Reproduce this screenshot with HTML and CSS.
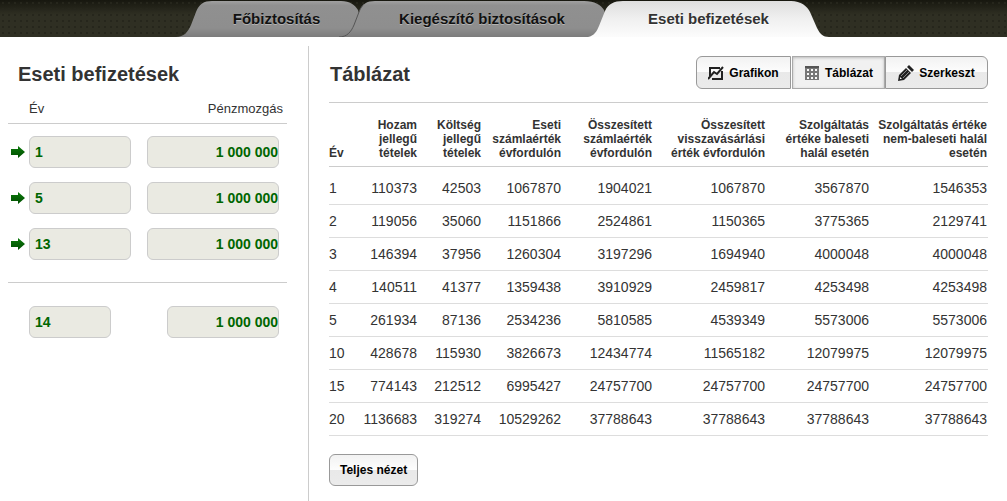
FILE: index.html
```html
<!DOCTYPE html>
<html lang="hu">
<head>
<meta charset="utf-8">
<title>Eseti befizetések</title>
<meta name="viewport" content="width=device-width, initial-scale=1">
<link rel="stylesheet" href="styles.css">
</head>
<body>
<svg class="defs" width="0" height="0" aria-hidden="true">
  <defs>
    <linearGradient id="tab-grey" x1="0" y1="0" x2="0" y2="1">
      <stop offset="0" stop-color="#a0a0a0"/><stop offset="0.12" stop-color="#909090"/><stop offset="0.75" stop-color="#8e8e8e"/><stop offset="1" stop-color="#7c7c7c"/>
    </linearGradient>
    <linearGradient id="tab-light" x1="0" y1="0" x2="0" y2="1">
      <stop offset="0" stop-color="#dedede"/><stop offset="0.5" stop-color="#f0f0f0"/><stop offset="1" stop-color="#fcfcfc"/>
    </linearGradient>
    <linearGradient id="arrow-green" x1="0" y1="0" x2="0" y2="1">
      <stop offset="0" stop-color="#0a7a0a"/><stop offset="1" stop-color="#004d00"/>
    </linearGradient>
  </defs>
  <symbol id="arrow" viewBox="0 0 14 12"><path d="M0 3H7V0L14 6L7 12V9H0Z" fill="url(#arrow-green)"/></symbol>
</svg>
<header class="topbar">
  <nav class="tabs">
    <a class="tab tab-main" href="#fo"><svg class="tab-shape" viewBox="0 0 189 36" preserveAspectRatio="none" aria-hidden="true"><path d="M0 36C8 36 12 31 15 24L20 11C23 3 28 0 36 0H165C174 0 179 4 182 9L189 36Z" fill="url(#tab-grey)"/></svg><span class="tab-text">Főbiztosítás</span></a>
    <a class="tab tab-extra" href="#kiegeszito"><svg class="tab-shape" viewBox="0 0 274 36" preserveAspectRatio="none" aria-hidden="true"><path d="M0 36C8 36 12 31 15 24L20 11C23 3 28 0 36 0H245C256 0 262 4 265 9L274 36Z" fill="url(#tab-grey)"/><path d="M0 36C8 36 12 31 15 24L20 11C21 8 23 5 25 3" fill="none" stroke="#555" stroke-width="1"/></svg><span class="tab-text">Kiegészítő biztosítások</span></a>
    <a class="tab tab-active" href="#eseti" aria-current="page"><svg class="tab-shape" viewBox="0 0 241 36" preserveAspectRatio="none" aria-hidden="true"><path d="M0 36C6 35 9 30 11 25L17 10C20 3 26 0 35 0H203C213 0 219 5 222 11L229 27C232 33 235 36 241 36Z" fill="url(#tab-light)"/></svg><span class="tab-text">Eseti befizetések</span></a>
  </nav>
</header>
<main class="content">
  <section class="payments">
    <h2 class="title">Eseti befizetések</h2>
    <div class="pay-head"><span>Év</span><span>Pénzmozgás</span></div>
    <div class="pay-rows">
      <div class="pay-row"><svg class="arrow" aria-hidden="true"><use href="#arrow"/></svg><input class="field year" aria-label="Év" value="1"><input class="field amount" aria-label="Pénzmozgás" value="1 000 000"></div>
      <div class="pay-row"><svg class="arrow" aria-hidden="true"><use href="#arrow"/></svg><input class="field year" aria-label="Év" value="5"><input class="field amount" aria-label="Pénzmozgás" value="1 000 000"></div>
      <div class="pay-row"><svg class="arrow" aria-hidden="true"><use href="#arrow"/></svg><input class="field year" aria-label="Év" value="13"><input class="field amount" aria-label="Pénzmozgás" value="1 000 000"></div>
    </div>
    <div class="pay-row pay-new"><input class="field year-new" aria-label="Új év" value="14"><input class="field amount-new" aria-label="Új pénzmozgás" value="1 000 000"></div>
  </section>
  <section class="results">
    <div class="results-head">
      <h2 class="title">Táblázat</h2>
      <div class="switch">
        <button class="btn first" type="button"><svg class="icon" viewBox="0 0 16 16" aria-hidden="true"><path d="M12 3H2V11M4 14H14V6" fill="none" stroke="#222" stroke-width="2"/><path d="M0 14L6 7L9 9L15 2" fill="none" stroke="#222" stroke-width="2"/></svg>Grafikon</button>
        <button class="btn pressed" type="button" aria-pressed="true"><svg class="icon" viewBox="0 0 16 16" aria-hidden="true"><path d="M1 1H15V15H1Z" fill="#777"/><path d="M1 1H15V3H1Z" fill="#555"/><path d="M3 4h2v2h-2zM7 4h2v2h-2zM11 4h2v2h-2zM3 8h2v2h-2zM7 8h2v2h-2zM11 8h2v2h-2zM3 12h2v2h-2zM7 12h2v2h-2zM11 12h2v2h-2z" fill="#f8f8f8"/></svg>Táblázat</button>
        <button class="btn last" type="button"><svg class="icon" viewBox="0 0 16 16" aria-hidden="true"><path d="M0 16L1 10L8 3L13 8L6 15Z" fill="#222"/><path d="M9 2L11 0L16 5L14 7Z" fill="#222"/><path d="M3 11L9 5M5 13L11 7" stroke="#888" stroke-width="1"/><path d="M2 12L4 14L2 14Z" fill="#f4f4f4"/></svg>Szerkeszt</button>
      </div>
    </div>
    <table class="grid">
      <colgroup><col class="c1"><col class="c2"><col class="c3"><col class="c4"><col class="c5"><col class="c6"><col class="c7"><col class="c8"></colgroup>
      <thead><tr><th>Év</th><th>Hozam<br>jellegű<br>tételek</th><th>Költség<br>jellegű<br>tételek</th><th>Eseti<br>számlaérték<br>évfordulón</th><th>Összesített<br>számlaérték<br>évfordulón</th><th>Összesített<br>visszavásárlási<br>érték évfordulón</th><th>Szolgáltatás<br>értéke baleseti<br>halál esetén</th><th>Szolgáltatás értéke<br>nem-baleseti halál<br>esetén</th></tr></thead>
      <tbody>
        <tr><td>1</td><td>110373</td><td>42503</td><td>1067870</td><td>1904021</td><td>1067870</td><td>3567870</td><td>1546353</td></tr>
        <tr><td>2</td><td>119056</td><td>35060</td><td>1151866</td><td>2524861</td><td>1150365</td><td>3775365</td><td>2129741</td></tr>
        <tr><td>3</td><td>146394</td><td>37956</td><td>1260304</td><td>3197296</td><td>1694940</td><td>4000048</td><td>4000048</td></tr>
        <tr><td>4</td><td>140511</td><td>41377</td><td>1359438</td><td>3910929</td><td>2459817</td><td>4253498</td><td>4253498</td></tr>
        <tr><td>5</td><td>261934</td><td>87136</td><td>2534236</td><td>5810585</td><td>4539349</td><td>5573006</td><td>5573006</td></tr>
        <tr><td>10</td><td>428678</td><td>115930</td><td>3826673</td><td>12434774</td><td>11565182</td><td>12079975</td><td>12079975</td></tr>
        <tr><td>15</td><td>774143</td><td>212512</td><td>6995427</td><td>24757700</td><td>24757700</td><td>24757700</td><td>24757700</td></tr>
        <tr><td>20</td><td>1136683</td><td>319274</td><td>10529262</td><td>37788643</td><td>37788643</td><td>37788643</td><td>37788643</td></tr>
      </tbody>
    </table>
    <button class="btn full-view" type="button">Teljes nézet</button>
  </section>
</main>
</body>
</html>
```
FILE: styles.css
```css
* { box-sizing: border-box; }
body { margin: 0; min-height: 100vh; display: flex; flex-direction: column; background: #fff; color: #333; font-family: "Liberation Sans", Arial, sans-serif; }
.defs { position: absolute; }

.topbar { padding: 1px 0 0 176px; background-color: #2b2b20; background-image: radial-gradient(#26261c 1px, transparent 1px), linear-gradient(#17170f, #2f2f23 40%); background-size: 6px 6px, 100% 100%; }
.tabs { display: flex; }
.tab { position: relative; display: flex; justify-content: center; height: 36px; color: #111; font-size: 15px; font-weight: bold; line-height: 36px; text-decoration: none; }
.tab-shape { position: absolute; inset: 0; width: 100%; height: 100%; }
.tab-text { position: relative; text-shadow: 0 1px 0 #b4b4b4; }
.tab-main { width: 189px; padding-left: 12px; }
.tab-extra { width: 274px; margin-left: -26px; padding-left: 12px; }
.tab-active { width: 241px; margin-left: -25px; color: #333; }
.tab-active .tab-text { text-shadow: 0 1px 0 #fff; }

.content { flex: 1; display: flex; }
.payments { flex: none; width: 309px; margin-top: 9px; padding: 16px 21px 0 8px; border-right: 1px solid #ccc; }
.title { margin: 0; font-size: 20px; line-height: 24px; }
.payments .title { padding-left: 10px; }
.pay-head { display: flex; justify-content: space-between; margin-top: 15px; padding: 0 4px 6px 21px; border-bottom: 1px solid #ccc; font-size: 12px; line-height: 16px; }
.pay-head { font-size: 13px; }
.pay-rows { display: flex; flex-direction: column; gap: 14px; padding: 12px 0 22px; border-bottom: 1px solid #ccc; }
.pay-row { display: flex; align-items: center; padding: 0 8px 0 3px; }
.arrow { width: 14px; height: 12px; margin-right: 4px; }
.field { height: 32px; border: 1px solid #ccc; border-radius: 6px; background: #eaeae2; color: #060; font: bold 14px "Liberation Sans", Arial, sans-serif; }
.year { width: 102px; padding: 0 5px; }
.year-new { width: 82px; padding: 0 5px; }
.amount { width: 132px; margin-left: auto; padding: 0; text-align: right; }
.amount-new { width: 112px; margin-left: auto; padding: 0; text-align: right; }
.pay-new { padding: 23px 8px 0 21px; }

.results { flex: 1; min-width: 0; padding: 18px 19px 0 20px; }
.results-head { display: flex; align-items: center; justify-content: space-between; height: 47px; padding-bottom: 12px; }
.results .title { padding: 3px 0 0 1px; }
.switch { display: flex; }
.btn { display: flex; align-items: center; justify-content: center; gap: 5px; height: 33px; padding: 0 10px; border: 1px solid #999; border-radius: 6px; background: linear-gradient(#f2f2f2, #fdfdfd 50%, #e9e9e9 50%, #ebebeb); color: #000; font: bold 12px "Liberation Sans", Arial, sans-serif; }
.icon { width: 16px; height: 16px; }
.first { width: 95px; border-radius: 6px 0 0 6px; }
.pressed { width: 93px; margin-left: 1px; border-color: #aaa; border-radius: 0; background: #f1f1f1; box-shadow: inset 0 1px 3px #bbb; }
.last { width: 103px; border-radius: 0 6px 6px 0; }

.grid { width: 100%; table-layout: fixed; border-collapse: collapse; border-top: 1px solid #ccc; }
.grid th { height: 64px; padding: 0 0 6px; border-bottom: 1px solid #ccc; font-size: 12px; line-height: 14px; text-align: right; vertical-align: bottom; white-space: nowrap; }
.grid td { height: 33px; padding: 0; border-bottom: 1px solid #ddd; font-size: 14px; line-height: 16px; text-align: right; }
.grid th:first-child, .grid td:first-child { text-align: left; }
.grid th:last-child, .grid td:last-child { padding-right: 1px; }
.grid tbody tr:first-child td { height: 38px; padding-top: 5px; }
.c1 { width: 28px; }
.c2 { width: 60px; }
.c3 { width: 64px; }
.c4 { width: 80px; }
.c5 { width: 91px; }
.c6 { width: 113px; }
.c7 { width: 104px; }
.c8 { width: 119px; }
.full-view { height: 32px; margin-top: 18px; }
```
